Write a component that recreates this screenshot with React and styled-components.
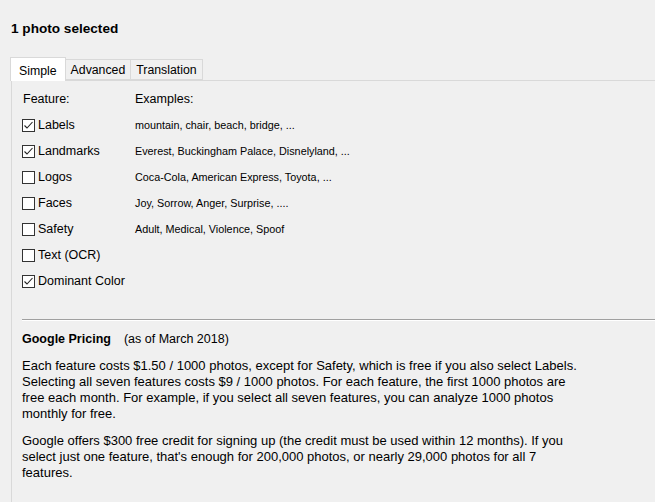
import React from "react";
import styled, { createGlobalStyle } from "styled-components";

const Global = createGlobalStyle`
  html, body { margin: 0; padding: 0; background: #f0f0f0; }
  body { font-family: "Liberation Sans", Arial, sans-serif; font-size: 12.5px; color: #000; }
`;

const Page = styled.div`
  width: 655px;
  height: 502px;
  overflow: hidden;
  background: #f0f0f0;
  display: flex;
  flex-direction: column;
`;

const Title = styled.div`
  font-weight: bold;
  font-size: 13.6px;
  line-height: 15px;
  padding: 21px 0 0 11px;
  height: 36px;
  box-sizing: border-box;
`;

const TabStrip = styled.div`
  display: flex;
  align-items: flex-end;
  margin-left: 10px;
  margin-top: 20px;
  height: 24px;
  position: relative;
  z-index: 1;
`;

const Tab = styled.div`
  box-sizing: border-box;
  height: ${(p) => (p.$active ? "24px" : "21px")};
  padding: ${(p) => (p.$active ? "2px 8px 0 8px" : "0 5px")};
  background: ${(p) => (p.$active ? "#ffffff" : "#f0f0f0")};
  border: 1px solid #d9d9d9;
  border-bottom: ${(p) => (p.$active ? "none" : "1px solid #d9d9d9")};
  margin-left: ${(p) => (p.$first ? "0" : "-1px")};
  margin-bottom: ${(p) => (p.$active ? "-1px" : "0")};
  display: flex;
  align-items: center;
  font-size: 12.3px;
  white-space: nowrap;
`;

const Pane = styled.div`
  flex: 1;
  margin-left: 11px;
  border-left: 1px solid #d9d9d9;
  border-top: 1px solid #d9d9d9;
  padding: 6px 0 0 10px;
  display: flex;
  flex-direction: column;
`;

const FeatureGrid = styled.div`
  display: grid;
  grid-template-columns: 113px 1fr;
  grid-template-rows: 25px;
  grid-auto-rows: 26px;
  align-items: center;
`;

const Head = styled.div`
  padding-left: ${(p) => (p.$pad ? "1px" : "0")};
  height: 20px;
  display: flex;
  align-items: center;
  margin-top: -2px;
`;

const CheckRow = styled.label`
  display: flex;
  align-items: center;
  gap: 3px;
`;

const Box = styled.span`
  box-sizing: border-box;
  width: 13px;
  height: 13px;
  border: 1px solid #333333;
  background: #ffffff;
  display: inline-flex;
  align-items: center;
  justify-content: center;
`;

const Example = styled.div`
  font-size: 10.8px;
`;

const Divider = styled.div`
  margin-top: 25px;
  height: 1px;
  background: #a0a0a0;
  border-bottom: 1px solid #ffffff;
`;

const PricingTitle = styled.div`
  margin-top: 11px;
  display: flex;
  gap: 13px;
  line-height: 15px;
`;

const Bold = styled.span`
  font-weight: bold;
`;

const Para = styled.p`
  margin: ${(p) => (p.$first ? "11px" : "11px")} 0 0 0;
  font-size: 13px;
  line-height: 16px;
  white-space: nowrap;
`;

function Check({ checked, label }) {
  return (
    <CheckRow>
      <Box>
        {checked && (
          <svg width="11" height="11" viewBox="0 0 11 11">
            <path d="M1.5 5.5 L4 8 L9.5 2" fill="none" stroke="#222" strokeWidth="1.1" />
          </svg>
        )}
      </Box>
      <span>{label}</span>
    </CheckRow>
  );
}

const features = [
  { label: "Labels", checked: true, ex: "mountain, chair, beach, bridge, ..." },
  { label: "Landmarks", checked: true, ex: "Everest, Buckingham Palace, Disnelyland, ..." },
  { label: "Logos", checked: false, ex: "Coca-Cola, American Express, Toyota, ..." },
  { label: "Faces", checked: false, ex: "Joy, Sorrow, Anger, Surprise, ...." },
  { label: "Safety", checked: false, ex: "Adult, Medical, Violence, Spoof" },
  { label: "Text (OCR)", checked: false, ex: "" },
  { label: "Dominant Color", checked: true, ex: "" },
];

export default function App() {
  return (
    <>
      <Global />
      <Page>
        <Title>1 photo selected</Title>
        <TabStrip>
          <Tab $active $first>Simple</Tab>
          <Tab>Advanced</Tab>
          <Tab>Translation</Tab>
        </TabStrip>
        <Pane>
          <FeatureGrid>
            <Head $pad>Feature:</Head>
            <Head>Examples:</Head>
            {features.map((f) => (
              <React.Fragment key={f.label}>
                <Check checked={f.checked} label={f.label} />
                <Example>{f.ex}</Example>
              </React.Fragment>
            ))}
          </FeatureGrid>
          <Divider />
          <PricingTitle>
            <Bold>Google Pricing</Bold>
            <span>(as of March 2018)</span>
          </PricingTitle>
          <Para $first>
            Each feature costs $1.50 / 1000 photos, except for Safety, which is free if you also select Labels.
            <br />
            Selecting all seven features costs $9 / 1000 photos. For each feature, the first 1000 photos are
            <br />
            free each month. For example, if you select all seven features, you can analyze 1000 photos
            <br />
            monthly for free.
          </Para>
          <Para>
            Google offers $300 free credit for signing up (the credit must be used within 12 months). If you
            <br />
            select just one feature, that's enough for 200,000 photos, or nearly 29,000 photos for all 7
            <br />
            features.
          </Para>
        </Pane>
      </Page>
    </>
  );
}
